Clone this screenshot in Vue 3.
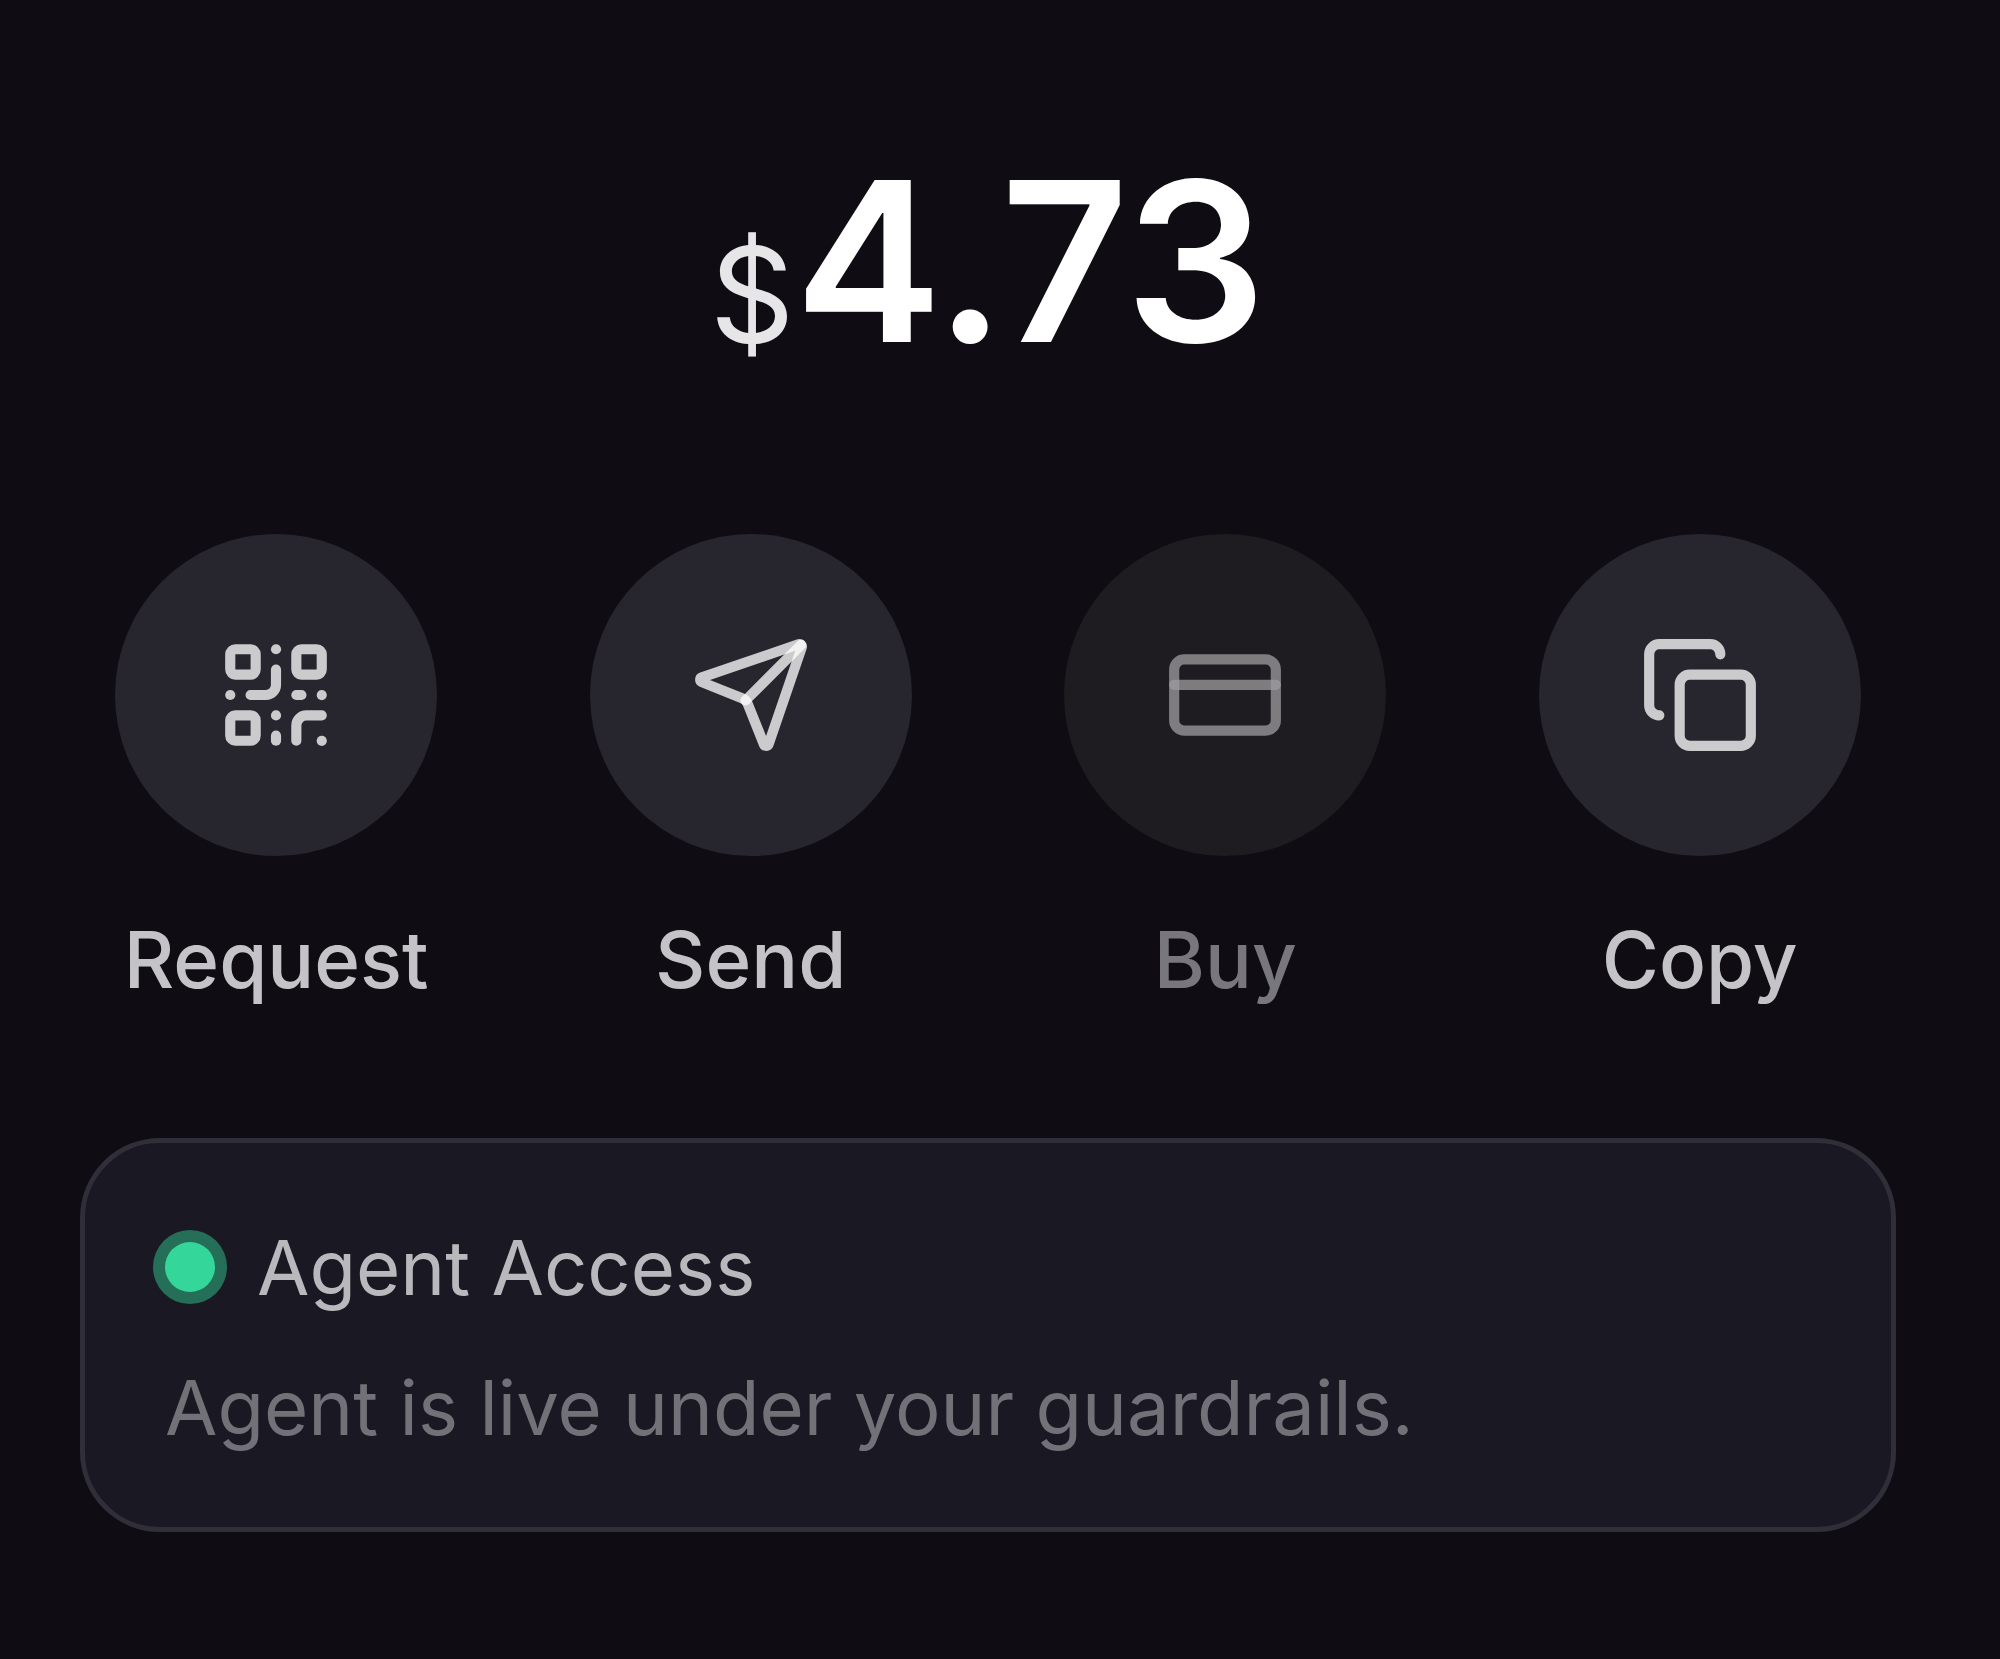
<script setup>
const balance = '4.73'

const actions = [
  { key: 'request', label: 'Request', disabled: false },
  { key: 'send', label: 'Send', disabled: false },
  { key: 'buy', label: 'Buy', disabled: true },
  { key: 'copy', label: 'Copy', disabled: false },
]

// 24-unit outline icons, one list of strokes per action
const icons = {
  request: [
    'M4 3h3a1 1 0 0 1 1 1v3a1 1 0 0 1-1 1H4a1 1 0 0 1-1-1V4a1 1 0 0 1 1-1z',
    'M17 3h3a1 1 0 0 1 1 1v3a1 1 0 0 1-1 1h-3a1 1 0 0 1-1-1V4a1 1 0 0 1 1-1z',
    'M4 16h3a1 1 0 0 1 1 1v3a1 1 0 0 1-1 1H4a1 1 0 0 1-1-1v-3a1 1 0 0 1 1-1z',
    'M21 16h-3a2 2 0 0 0-2 2v3',
    'M21 21v.01',
    'M12 7v3a2 2 0 0 1-2 2H7',
    'M3 12h.01',
    'M12 3h.01',
    'M12 16v.01',
    'M16 12h1',
    'M21 12v.01',
    'M12 21v-1',
  ],
  send: [
    'M14.536 21.686a.5.5 0 0 0 .937-.024l6.5-19a.496.496 0 0 0-.635-.635l-19 6.5a.5.5 0 0 0-.024.937l7.93 3.18a2 2 0 0 1 1.112 1.11z',
    'm21.854 2.147-10.94 10.939',
  ],
  buy: [
    'M4 5h16a2 2 0 0 1 2 2v10a2 2 0 0 1-2 2H4a2 2 0 0 1-2-2V7a2 2 0 0 1 2-2z',
    'M2 10h20',
  ],
  copy: [
    'M10 8h10a2 2 0 0 1 2 2v10a2 2 0 0 1-2 2H10a2 2 0 0 1-2-2V10a2 2 0 0 1 2-2z',
    'M4 16c-1.1 0-2-.9-2-2V4c0-1.1.9-2 2-2h10c1.1 0 2 .9 2 2',
  ],
}
</script>

<template>
  <main class="wallet">
    <h1 class="balance">
      <span class="balance-currency">$</span>
      <span class="balance-value">{{ balance }}</span>
    </h1>

    <div class="actions">
      <button
        v-for="a in actions"
        :key="a.key"
        type="button"
        class="action"
        :disabled="a.disabled"
      >
        <span class="action-circle">
          <svg class="action-icon" viewBox="0 0 24 24" aria-hidden="true">
            <path v-for="(d, i) in icons[a.key]" :key="i" :d="d" />
          </svg>
        </span>
        <span class="action-label">{{ a.label }}</span>
      </button>
    </div>

    <section class="agent">
      <h2 class="agent-title">
        <span class="agent-dot"></span>
        Agent Access
      </h2>
      <p class="agent-text">Agent is live under your guardrails.</p>
    </section>
  </main>
</template>

<style>
body {
  margin: 0;
  background: #0f0c13;
}
</style>

<style scoped>
.wallet {
  display: flex;
  flex-direction: column;
  box-sizing: border-box;
  min-height: 100vh;
  padding: 150px 104px 80px 80px;
  background: #0f0c13;
  font-family: Inter, "Liberation Sans", sans-serif;
}

/* Balance */
.balance {
  display: flex;
  justify-content: center;
  align-items: baseline;
  margin: 0 0 160px;
  line-height: 1;
  color: #fff;
}

.balance-currency {
  font-size: 132px;
  font-weight: 400;
  color: #e6e5e8;
}

.balance-value {
  font-size: 222px;
  font-weight: 600;
  line-height: 224px;
}

/* Action row */
.actions {
  display: grid;
  grid-template-columns: repeat(4, 1fr);
  gap: 82px;
  margin-bottom: 130px;
}

.action {
  display: flex;
  flex-direction: column;
  align-items: center;
  gap: 56px;
  padding: 0;
  border: none;
  background: transparent;
  font-family: inherit;
  color: #c4c3c7;
  cursor: pointer;
}

.action-circle {
  display: flex;
  align-items: center;
  justify-content: center;
  width: 322px;
  height: 322px;
  border-radius: 50%;
  background: #27252e;
}

.action-icon {
  width: 122px;
  height: 122px;
  fill: none;
  stroke: rgba(255, 255, 255, 0.76);
  stroke-width: 2;
  stroke-linecap: round;
  stroke-linejoin: round;
}

.action-label {
  font-size: 78px;
  font-weight: 500;
  line-height: 96px;
}

.action:disabled {
  color: #79777e;
  cursor: default;
}

.action:disabled .action-circle {
  background: #1e1b21;
}

.action:disabled .action-icon {
  opacity: 0.56;
}

/* Agent card */
.agent {
  padding: 76px 80px 72px;
  border: 5px solid #302e38;
  border-radius: 80px;
  background: #1a1822;
}

.agent-title {
  display: flex;
  align-items: center;
  gap: 42px;
  margin: 0 0 44px;
  font-size: 76px;
  font-weight: 400;
  line-height: 96px;
  color: #b9b8bc;
}

.agent-dot {
  flex-shrink: 0;
  width: 50px;
  height: 50px;
  border-radius: 50%;
  background: #35d69a;
  box-shadow: 0 0 0 12px #256f59;
}

.agent-text {
  margin: 0;
  font-size: 76px;
  line-height: 96px;
  color: #737178;
}
</style>
